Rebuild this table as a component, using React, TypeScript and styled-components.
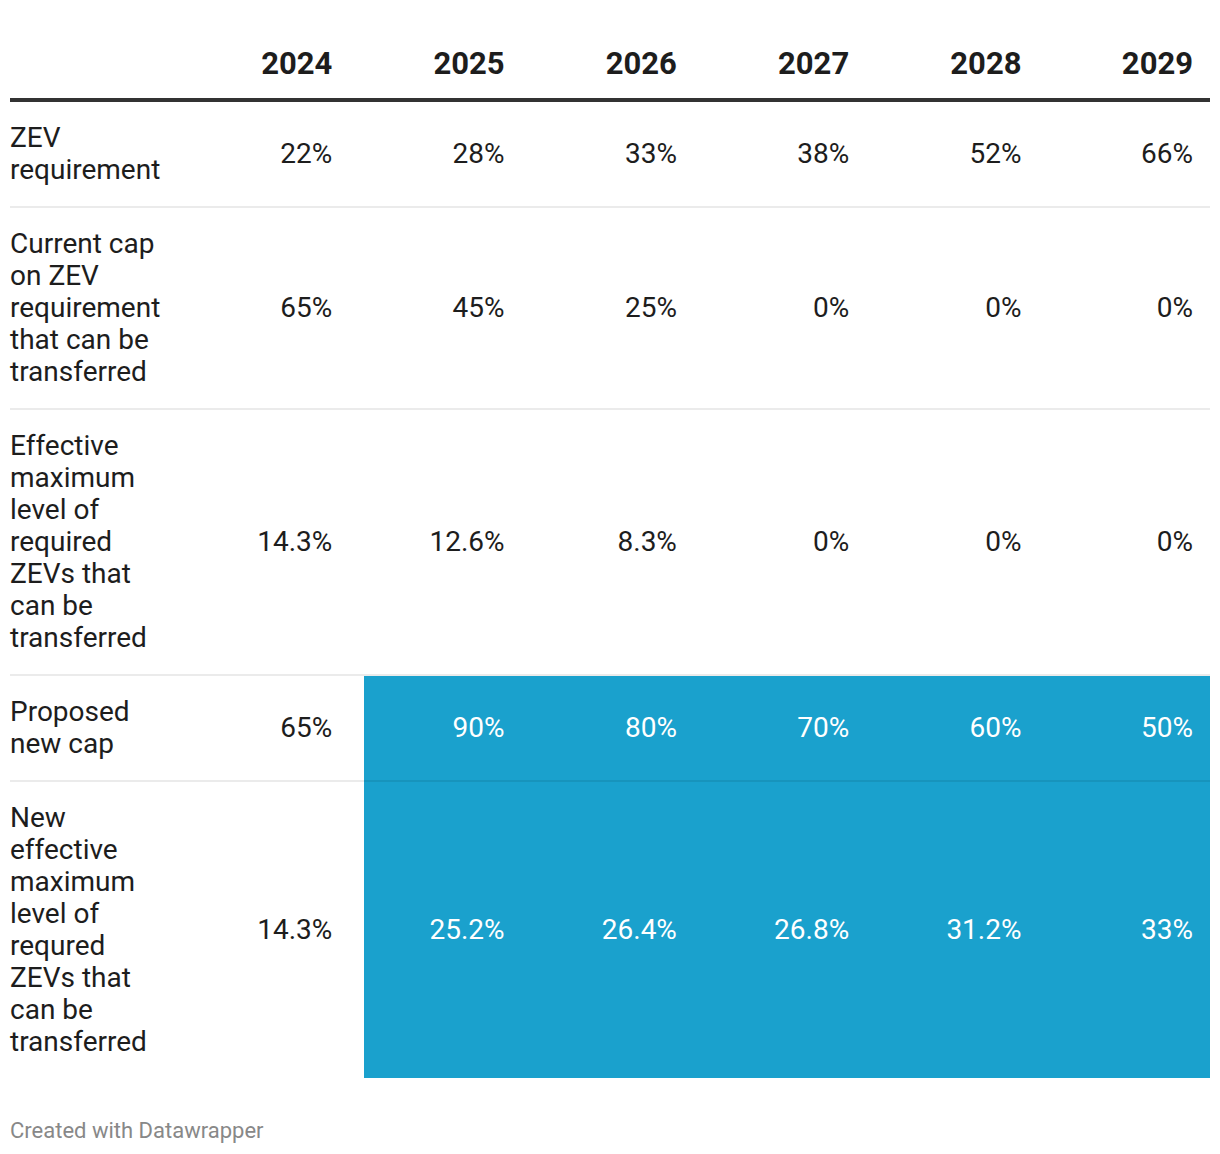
import React from "react";
import styled, { createGlobalStyle } from "styled-components";

const GlobalStyle = createGlobalStyle`
  html, body { margin: 0; padding: 0; background: #ffffff; }
  body { font-family: Roboto, "Noto Sans", "Liberation Sans", sans-serif; color: #1d1d1d; }
`;

const COLS = "182px repeat(5, 172.3px) 1fr";

const Page = styled.div`
  width: 1220px;
  box-sizing: border-box;
  padding: 46px 10px 0 10px;
`;

const Table = styled.div`
  display: flex;
  flex-direction: column;
`;

const HeadRow = styled.div`
  display: grid;
  grid-template-columns: ${COLS};
  border-bottom: 4px solid #333333;
`;

const HeadCell = styled.div`
  font-weight: 700;
  font-size: 31px;
  line-height: 36px;
  text-align: right;
  padding: 0 32px 16px 0;
  color: #1d1d1d;
  &:last-child { padding-right: 17px; }
`;

const BodyRow = styled.div`
  display: grid;
  grid-template-columns: ${COLS};
`;

const LabelCell = styled.div<{ $last?: boolean }>`
  font-size: 28px;
  line-height: 32px;
  padding: 20px 16px 20px 0;
  border-bottom: ${(p) => (p.$last ? "none" : "2px solid rgba(0,0,0,0.08)")};
  display: flex;
  align-items: center;
`;

const ValueCell = styled.div<{ $hl?: boolean; $last?: boolean }>`
  font-size: 28px;
  line-height: 32px;
  text-align: right;
  padding: 20px 32px 20px 0;
  border-bottom: ${(p) => (p.$last ? "none" : "2px solid rgba(0,0,0,0.08)")};
  background: ${(p) => (p.$hl ? "#1aa1cd" : "transparent")};
  color: ${(p) => (p.$hl ? "#ffffff" : "#1d1d1d")};
  display: flex;
  align-items: center;
  justify-content: flex-end;
  &:last-child { padding-right: 17px; }
`;

const Footer = styled.div`
  margin-top: 40px;
  font-size: 22px;
  line-height: 26px;
  color: #888888;
`;

const years = ["2024", "2025", "2026", "2027", "2028", "2029"];

type RowData = { label: string; values: string[]; hlFrom?: number };

const rows: RowData[] = [
  { label: "ZEV requirement", values: ["22%", "28%", "33%", "38%", "52%", "66%"] },
  {
    label: "Current cap on ZEV requirement that can be transferred",
    values: ["65%", "45%", "25%", "0%", "0%", "0%"],
  },
  {
    label: "Effective maximum level of required ZEVs that can be transferred",
    values: ["14.3%", "12.6%", "8.3%", "0%", "0%", "0%"],
  },
  { label: "Proposed new cap", values: ["65%", "90%", "80%", "70%", "60%", "50%"], hlFrom: 1 },
  {
    label: "New effective maximum level of requred ZEVs that can be transferred",
    values: ["14.3%", "25.2%", "26.4%", "26.8%", "31.2%", "33%"],
    hlFrom: 1,
  },
];

export default function App() {
  return (
    <>
      <GlobalStyle />
      <Page>
        <Table>
          <HeadRow>
            <HeadCell />
            {years.map((y) => (
              <HeadCell key={y}>{y}</HeadCell>
            ))}
          </HeadRow>
          {rows.map((r, i) => {
            const last = i === rows.length - 1;
            return (
              <BodyRow key={r.label}>
                <LabelCell $last={last}>{r.label}</LabelCell>
                {r.values.map((v, j) => (
                  <ValueCell
                    key={j}
                    $last={last}
                    $hl={r.hlFrom !== undefined && j >= r.hlFrom}
                  >
                    {v}
                  </ValueCell>
                ))}
              </BodyRow>
            );
          })}
        </Table>
        <Footer>Created with Datawrapper</Footer>
      </Page>
    </>
  );
}
